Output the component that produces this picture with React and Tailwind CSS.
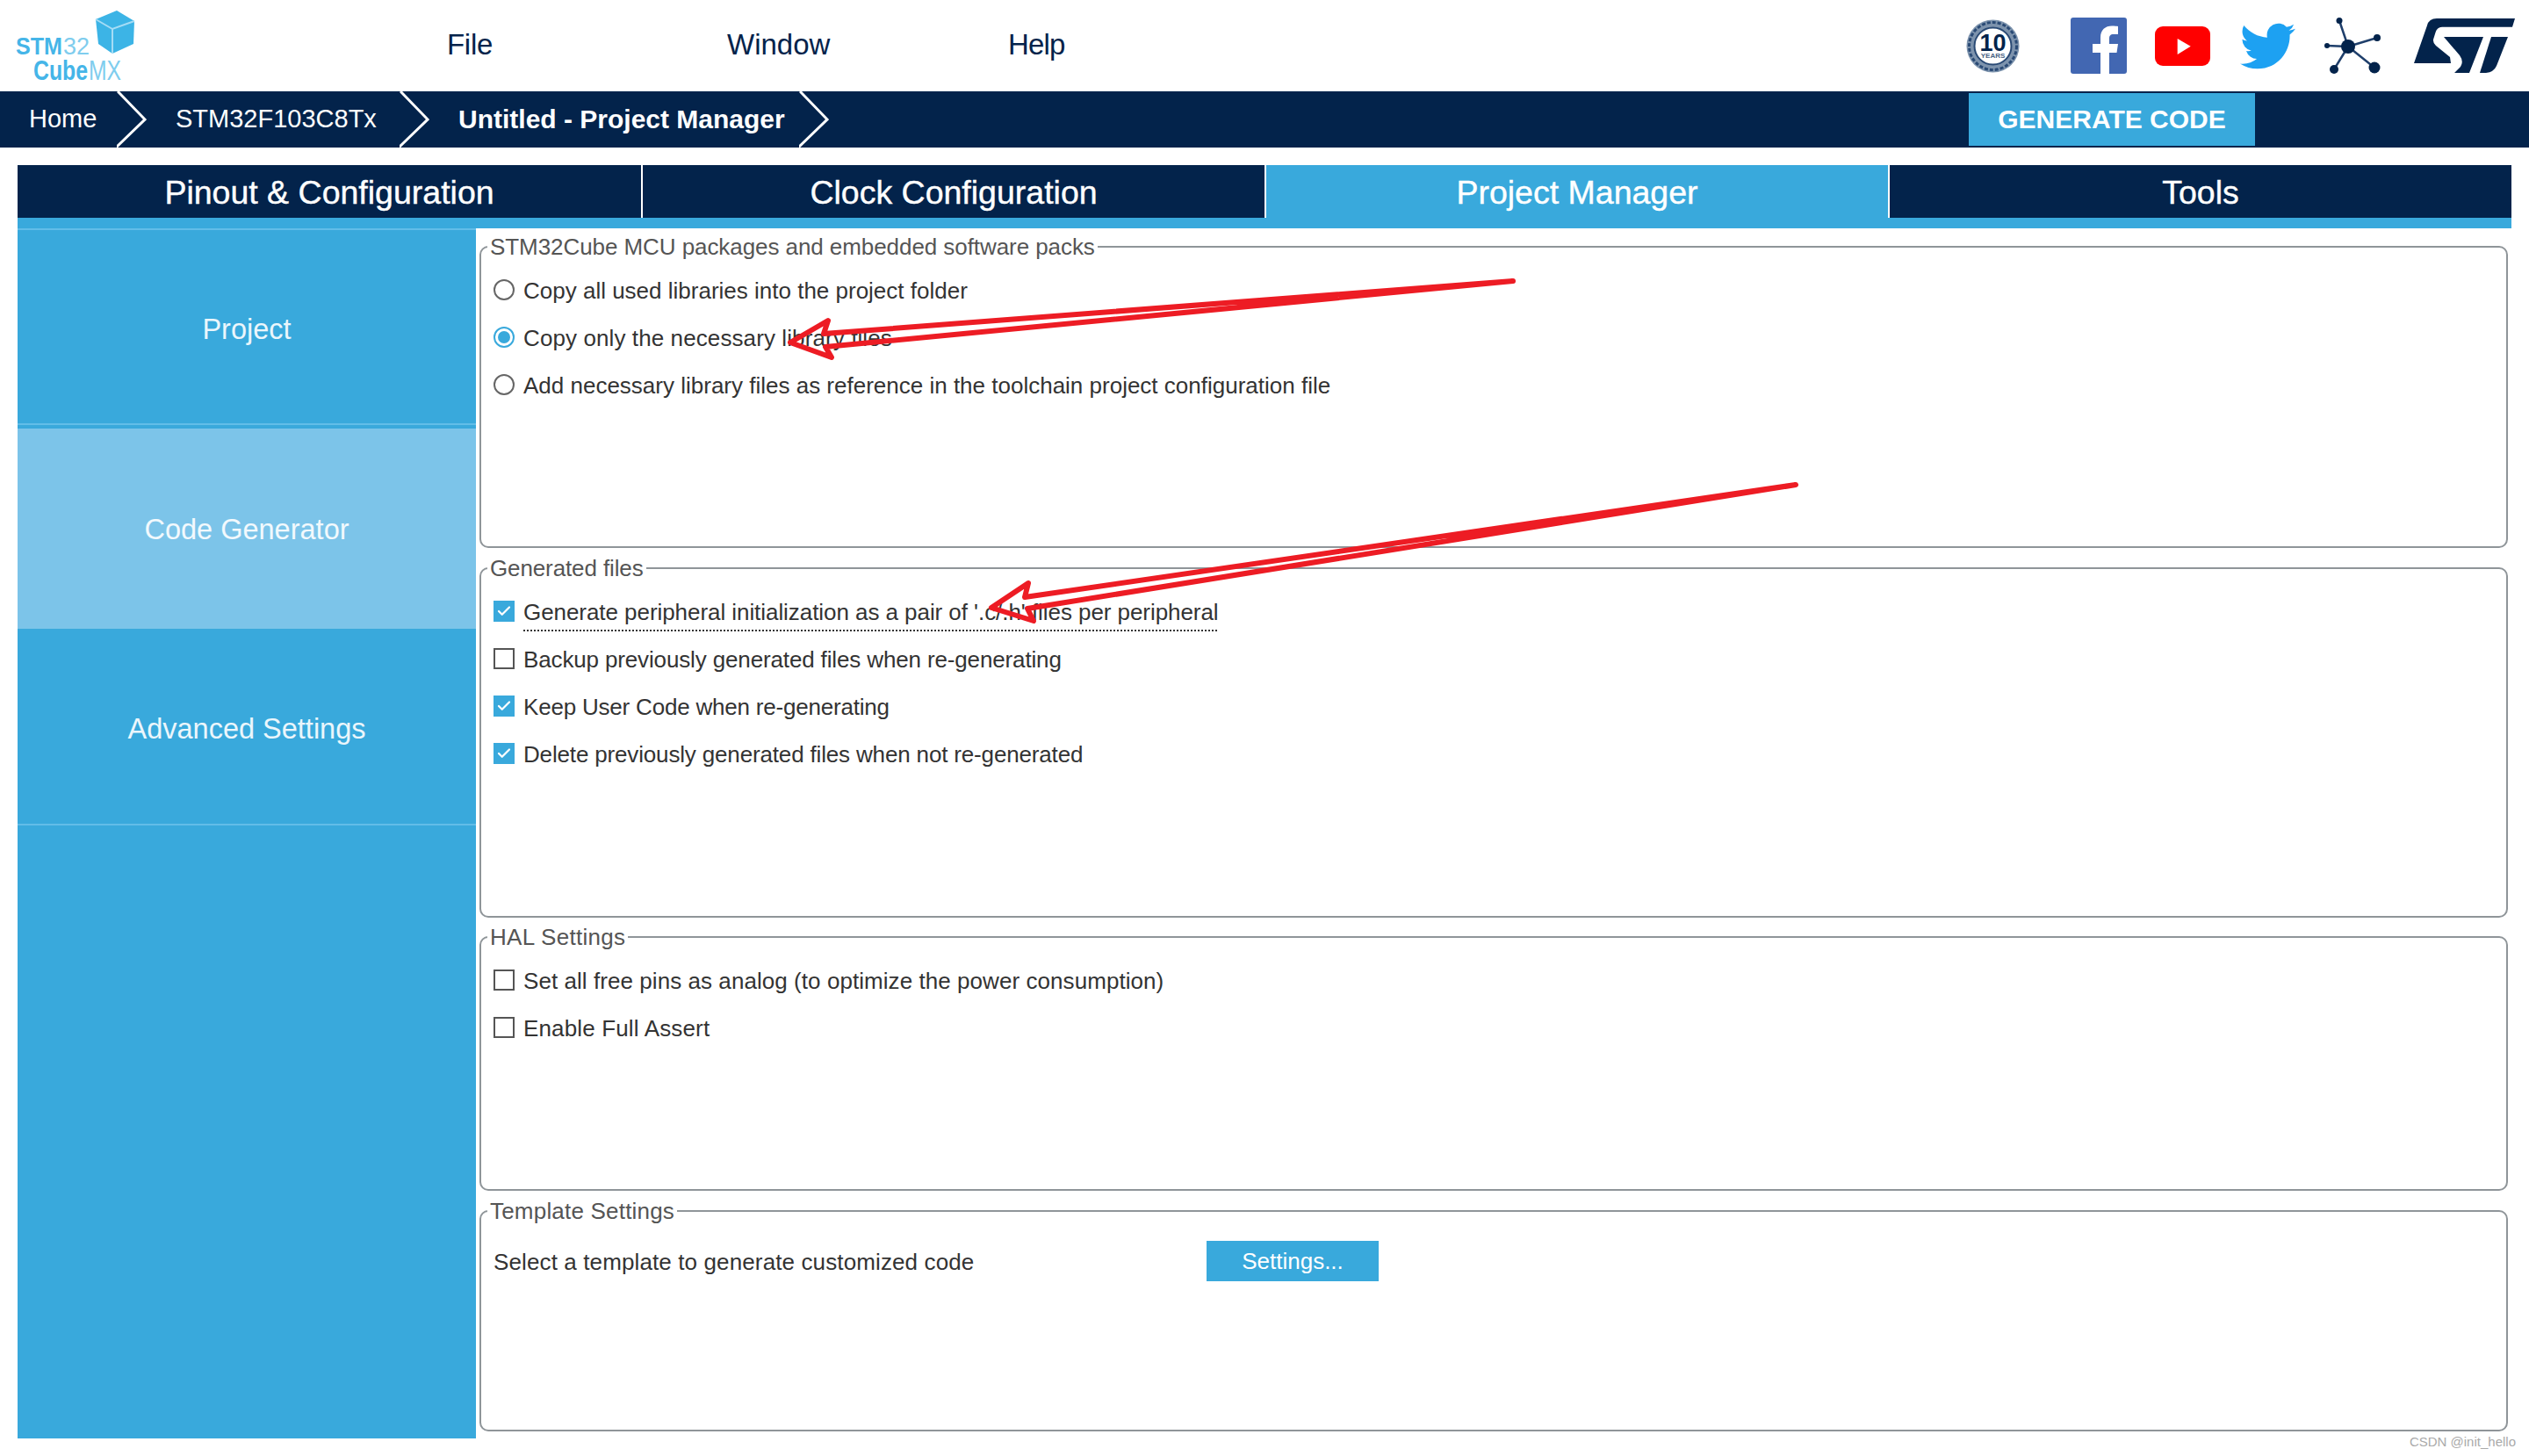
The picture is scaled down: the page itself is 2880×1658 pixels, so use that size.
import { Check } from 'lucide-react';

const tabs = ['Pinout & Configuration', 'Clock Configuration', 'Project Manager', 'Tools'];

const Logo = () => (
  <svg className="w-[180px] h-[104px] shrink-0" viewBox="0 0 180 104">
    <path d="M133 12L153 24L152 50L128 61L112 50L109 22Z" fill="#3cb4e6" />
    <path d="M109 22L128 33L153 24M128 33V61" fill="none" stroke="#a5dcf5" strokeWidth="2" />
    <text x="18" y="62" fontSize="28" fontWeight="700" fill="#45b5e8" textLength="53" lengthAdjust="spacingAndGlyphs">STM</text>
    <text x="72" y="62" fontSize="28" fill="#7fcdee" textLength="30" lengthAdjust="spacingAndGlyphs">32</text>
    <text x="38" y="91" fontSize="32" fontWeight="700" fill="#45b5e8" textLength="62" lengthAdjust="spacingAndGlyphs">Cube</text>
    <text x="101" y="91" fontSize="32" fill="#7fcdee" textLength="37" lengthAdjust="spacingAndGlyphs">MX</text>
  </svg>
);

const Badge = () => (
  <svg className="w-[63px] h-[63px]" viewBox="0 0 63 63">
    <circle cx="31.5" cy="31.5" r="30" fill="#7d93ad" />
    <circle cx="31.500" cy="31.500" r="27" fill="none" stroke="#2a4a75" strokeWidth="3" strokeDasharray="4 2" />
    <circle cx="31.5" cy="31.5" r="21" fill="#fff" stroke="#2a4a75" strokeWidth="2" />
    <text x="31.5" y="37" textAnchor="middle" fontSize="27" fontWeight="700" fill="#03234b">10</text>
    <text x="31.5" y="45" textAnchor="middle" fontSize="8" fontWeight="700" fill="#4a6485">YEARS</text>
  </svg>
);

const Facebook = () => (
  <svg className="w-[64px] h-[64px] ml-[57px]" viewBox="0 0 64 64">
    <rect width="64" height="64" rx="3" fill="#4267b2" />
    <path d="M44 64V40h8.5L54 30H44v-6c0-3 1-5 5-5h5v-9c-1 0-4-.4-7-.4-7.500 0-13 4.600-13 13V30H25v10h9v24z" fill="#fff" />
  </svg>
);

const Youtube = () => (
  <svg className="w-[63px] h-[45px] ml-[32px]" viewBox="0 0 63 45">
    <rect width="63" height="45" rx="9" fill="#ff0000" />
    <path d="M25.700 14L40.700 22.700L25.700 32Z" fill="#fff" />
  </svg>
);

const Twitter = () => (
  <svg className="w-[63px] h-[53px] ml-[34px]" viewBox="0 0 24 20" preserveAspectRatio="none">
    <path
      transform="translate(0 -2)"
      d="M23.953 4.57a10 10 0 01-2.825.775 4.958 4.958 0 002.163-2.723c-.951.555-2.005.959-3.127 1.184a4.92 4.92 0 00-8.384 4.482C7.69 8.095 4.067 6.13 1.64 3.162a4.822 4.822 0 00-.666 2.475c0 1.71.87 3.213 2.188 4.096a4.904 4.904 0 01-2.228-.616v.06a4.923 4.923 0 003.946 4.827 4.996 4.996 0 01-2.212.085 4.936 4.936 0 004.604 3.417 9.867 9.867 0 01-6.102 2.105c-.39 0-.779-.023-1.17-.067a13.995 13.995 0 007.557 2.209c9.053 0 13.998-7.496 13.998-13.985 0-.21 0-.42-.015-.63A9.935 9.935 0 0024 4.59z"
      fill="#1da1f2"
    />
  </svg>
);

const Network = () => (
  <svg className="w-[64px] h-[64px] ml-[33px]" viewBox="0 0 64 64">
    <path d="M27 33L17 3.500M27 33L60 23M27 33L3 32M27 33L11 59M27 33L57 57" stroke="#1f3f6b" strokeWidth="2.500" />
    <circle cx="27" cy="33" r="8" fill="#03234b" />
    <circle cx="17" cy="3.500" r="3.500" fill="#03234b" />
    <circle cx="60" cy="23" r="4" fill="#03234b" />
    <circle cx="3" cy="32" r="3" fill="#03234b" />
    <circle cx="11" cy="59" r="5" fill="#03234b" />
    <circle cx="57" cy="57" r="6.500" fill="#03234b" />
  </svg>
);

const StLogo = () => (
  <svg className="w-[116px] h-[64px] ml-[38px]" viewBox="0 0 116 64">
    <path
      d="M115 1L112 10.700H32Q26 11 24.500 17L22 25Q21.500 29 25 32L41 45L42 52H0L15 9Q17 1 26 1Z"
      fill="#03234b"
    />
    <path d="M34 22H79L63 63H46L53 56Q57 50 52 43Z" fill="#03234b" />
    <path d="M88 22H107L94 55Q91 62 82 63H75Z" fill="#03234b" />
  </svg>
);

const Chevron = () => (
  <svg className="w-[34px] h-[64px] shrink-0" viewBox="0 0 34 64">
    <path d="M1 0L32 32L-1 64" fill="none" stroke="#fff" strokeWidth="3" />
  </svg>
);

const Radio = ({ checked }) => (
  <span
    className={`w-[24px] h-[24px] rounded-full border-2 flex items-center justify-center shrink-0 ${
      checked ? 'border-[#39a9dc]' : 'border-[#666]'
    }`}
  >
    {checked && <span className="w-[14px] h-[14px] rounded-full bg-[#39a9dc]" />}
  </span>
);

const Checkbox = ({ checked }) =>
  checked ? (
    <span className="w-[24px] h-[24px] bg-[#39a9dc] flex items-center justify-center shrink-0">
      <Check className="w-[18px] h-[18px] text-white" strokeWidth={3} />
    </span>
  ) : (
    <span className="w-[24px] h-[24px] border-2 border-[#555] shrink-0" />
  );

const Row = ({ children, control, className = '' }) => (
  <div className="h-[54px] flex items-center gap-[10px]">
    {control}
    <span className={`mt-[2px] ${className}`}>{children}</span>
  </div>
);

const Group = ({ title, className, titleClass, bodyClass = 'pt-[7px]', children }) => (
  <fieldset className={`border-2 border-[#8f9599] rounded-[10px] ${className}`}>
    <legend className={`ml-[7px] px-[3px] h-[30px] leading-[30px] text-[#555] ${titleClass}`}>{title}</legend>
    <div className={`pl-[14px] ${bodyClass}`}>{children}</div>
  </fieldset>
);

export default function App() {
  return (
    <div className="relative w-[2880px] h-[1658px] bg-white overflow-hidden font-['Liberation_Sans',Arial,sans-serif]">
      {/* barra superior */}
      <header className="h-[104px] flex items-center text-[33px] text-[#03234b]">
        <Logo />
        <nav className="flex ml-[329px] pb-[2px]">
          <span className="w-[319px] tracking-[-0.3px]">File</span>
          <span className="w-[320px]">Window</span>
          <span className="tracking-[-0.8px]">Help</span>
        </nav>
        <div className="ml-auto mr-[15px] flex items-center">
          <Badge />
          <Facebook />
          <Youtube />
          <Twitter />
          <Network />
          <StLogo />
        </div>
      </header>

      {/* breadcrumb */}
      <div className="h-[64px] bg-[#03234b] flex items-center text-[29px] text-white">
        <span className="ml-[33px] w-[100px]">Home</span>
        <Chevron />
        <span className="ml-[33px] w-[255px]">STM32F103C8Tx</span>
        <Chevron />
        <span className="ml-[33px] w-[388px] font-bold text-[30px] pb-[1px]">Untitled - Project Manager</span>
        <Chevron />
        <button className="ml-[1298px] w-[326px] h-[60px] bg-[#39a9dc] text-white font-bold text-[30px] pb-[2px]">
          GENERATE CODE
        </button>
      </div>

      {/* pestañas */}
      <div className="mt-[20px] mx-[20px] grid grid-cols-4 h-[60px] text-[37.5px] text-white [-webkit-text-stroke:0.4px_white]">
        {tabs.map((tab, i) => (
          <div
            key={tab}
            className={`flex items-center justify-center pt-[2px] ${i === 2 ? 'bg-[#39a9dc]' : 'bg-[#03234b]'} ${
              i > 0 ? 'border-l-2 border-white' : ''
            }`}
          >
            {tab}
          </div>
        ))}
      </div>
      <div className="mx-[20px] h-[12px] bg-[#39a9dc]" />

      <div className="flex pl-[20px]">
        {/* menú lateral */}
        <aside className="w-[522px] h-[1378px] bg-[#39a9dc] border-t-2 border-[#62bde8] text-[32.5px] text-white/90">
          <div className="h-[222px] pt-[6px] border-b-2 border-[#62bde8] flex items-center justify-center">Project</div>
          <div className="mt-[4px] h-[228px] pt-[2px] bg-[#7cc4e9] flex items-center justify-center">Code Generator</div>
          <div className="h-[224px] pt-[6px] border-b-2 border-[#62bde8] flex items-center justify-center">Advanced Settings</div>
        </aside>

        {/* contenido */}
        <main className="ml-[4px] w-[2310px] pt-[6px] flex flex-col gap-[8px] text-[26px] text-[#333]">
          <Group
            title="STM32Cube MCU packages and embedded software packs"
            className="h-[358px]"
            titleClass="tracking-[-0.07px]"
          >
            <Row control={<Radio />}>Copy all used libraries into the project folder</Row>
            <Row control={<Radio checked />} className="tracking-[0.1px]">Copy only the necessary library files</Row>
            <Row control={<Radio />}>Add necessary library files as reference in the toolchain project configuration file</Row>
          </Group>
          <Group title="Generated files" className="h-[413px]" titleClass="tracking-[-0.12px]">
            <Row
              control={<Checkbox checked />}
              className="tracking-[-0.06px] underline decoration-dotted decoration-2 underline-offset-[12px]"
            >
              Generate peripheral initialization as a pair of '.c/.h' files per peripheral
            </Row>
            <Row control={<Checkbox />} className="tracking-[-0.14px]">Backup previously generated files when re-generating</Row>
            <Row control={<Checkbox checked />} className="tracking-[-0.2px]">Keep User Code when re-generating</Row>
            <Row control={<Checkbox checked />} className="tracking-[-0.16px]">Delete previously generated files when not re-generated</Row>
          </Group>
          <Group title="HAL Settings" className="h-[304px] -mt-px" titleClass="tracking-[0.3px]">
            <Row control={<Checkbox />} className="tracking-[0.06px]">Set all free pins as analog (to optimize the power consumption)</Row>
            <Row control={<Checkbox />} className="tracking-[0.15px]">Enable Full Assert</Row>
          </Group>
          <Group title="Template Settings" className="h-[266px]" titleClass="tracking-[0.2px]" bodyClass="pt-[19px]">
            <div className="h-[46px] flex items-center">
              <span className="w-[812px] mt-[2px] tracking-[0.12px]">Select a template to generate customized code</span>
              <button className="w-[196px] h-[46px] bg-[#39a9dc] text-white">Settings...</button>
            </div>
          </Group>
        </main>
      </div>

      {/* flechas rojas dibujadas encima de la captura */}
      <svg className="absolute left-0 top-0 w-[2880px] h-[1658px] pointer-events-none" viewBox="0 0 2880 1658">
        <path
          d="M1723 320L938 380L943 365L900 390L947 407L940 395Z"
          fill="none"
          stroke="#ed1c24"
          strokeWidth="6"
          strokeLinejoin="round"
        />
        <path
          d="M2045 552L1167 680L1171 664L1129 692L1177 707L1170 693Z"
          fill="none"
          stroke="#ed1c24"
          strokeWidth="6"
          strokeLinejoin="round"
        />
      </svg>

      <span className="absolute right-[15px] bottom-[8px] text-[15px] leading-[16px] text-[#aaa]">CSDN @init_hello</span>
    </div>
  );
}
